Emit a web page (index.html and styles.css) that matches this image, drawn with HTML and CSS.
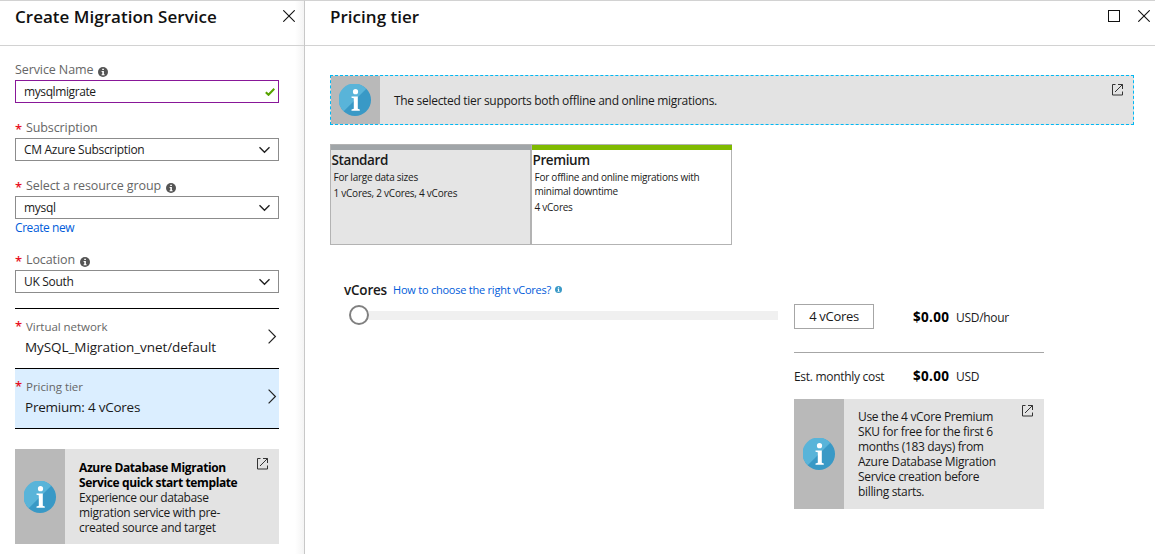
FILE: index.html
```
<!DOCTYPE html>
<html lang="en">
<head>
<meta charset="utf-8">
<title>Create Migration Service</title>
<link rel="stylesheet" href="styles.css">
</head>
<body>
<svg class="defs" width="0" height="0" aria-hidden="true">
  <symbol id="close" viewBox="0 0 12 12"><path d="M.3.3 11.7 11.7M11.7.3.3 11.7" fill="none" stroke="#111" stroke-width="1.1"/></symbol>
  <symbol id="info" viewBox="0 0 10 10"><circle cx="5" cy="5" r="5" fill="currentColor"/><path d="M4.2 1.7h1.7v1.4H4.2zM3.6 4h2.3v3.3h.7v1H3.6v-1h.7V5h-.7z" fill="#fff"/></symbol>
  <symbol id="down" viewBox="0 0 12 8"><path d="M.5 1.2 5.500 6.200l5-5" fill="none" stroke="#222" stroke-width="1.4"/></symbol>
  <symbol id="right" viewBox="0 0 9 15"><path d="m.6.7 6.800 6.800L.6 14.300" fill="none" stroke="#222" stroke-width="1.2"/></symbol>
  <symbol id="open" viewBox="0 0 12 12"><path d="M4.500.5h-3v10.500h10v-3.500M7 .5h4.500v4.500M11.500.5l-7.500 7.500" fill="none" stroke="#333" stroke-width="1"/></symbol>
  <symbol id="badge" viewBox="0 0 32 32"><circle cx="16" cy="16" r="16" fill="#3999c6"/><path d="M27.300 4.700A16 16 0 1 0 4.700 27.300z" fill="#59b4d9"/><circle cx="16.500" cy="7.700" r="2.600" fill="#fff"/><path d="M12.500 12.500h6.300v12.200l2 .7v1.400h-8.300v-1.400l2.300-.7V14.300l-2.300-.5z" fill="#fff"/></symbol>
</svg>
<main class="portal">
  <section class="blade create">
    <header class="head"><h1 class="title">Create Migration Service</h1><svg class="x"><use href="#close"/></svg></header>
    <div class="form">
      <div class="field">
        <div class="label"><span>Service Name</span><svg class="info"><use href="#info"/></svg></div>
        <div class="control valid"><span>mysqlmigrate</span><svg class="check" viewBox="0 0 10 8"><path d="m.8 4.300 2.700 2.500L9.300.8" fill="none" stroke="#57a300" stroke-width="2.100"/></svg></div>
      </div>
      <div class="field">
        <div class="label"><b class="req">*</b><span>Subscription</span></div>
        <div class="control"><span>CM Azure Subscription</span><svg class="down"><use href="#down"/></svg></div>
      </div>
      <div class="field group">
        <div class="label"><b class="req">*</b><span>Select a resource group</span><svg class="info"><use href="#info"/></svg></div>
        <div class="control"><span>mysql</span><svg class="down"><use href="#down"/></svg></div>
        <a class="link">Create new</a>
      </div>
      <div class="field">
        <div class="label"><b class="req">*</b><span>Location</span><svg class="info"><use href="#info"/></svg></div>
        <div class="control"><span>UK South</span><svg class="down"><use href="#down"/></svg></div>
      </div>
      <div class="pickers">
        <div class="picker"><div class="sublabel"><b class="req">*</b><span>Virtual network</span></div><div class="value">MySQL_Migration_vnet/default</div><svg class="right"><use href="#right"/></svg></div>
        <div class="picker selected"><div class="sublabel"><b class="req">*</b><span>Pricing tier</span></div><div class="value tight">Premium: 4 vCores</div><svg class="right"><use href="#right"/></svg></div>
      </div>
      <aside class="notice quick">
        <div class="stripe"><svg class="badge"><use href="#badge"/></svg></div>
        <p class="copy"><b>Azure Database Migration<br>Service quick start template</b><br>Experience our database<br><span class="loose">migration service with pre-</span><br><span class="loose">created source and target</span></p>
        <svg class="open"><use href="#open"/></svg>
      </aside>
    </div>
  </section>
  <section class="blade pricing">
    <header class="head"><h1 class="title">Pricing tier</h1><span class="max"></span><svg class="x"><use href="#close"/></svg></header>
    <div class="content">
      <aside class="notice banner">
        <div class="stripe"><svg class="badge"><use href="#badge"/></svg></div>
        <p class="copy">The selected tier supports both offline and online migrations.</p>
        <svg class="open"><use href="#open"/></svg>
      </aside>
      <div class="tiers">
        <div class="tier standard"><h2>Standard</h2><p>For large data sizes</p><p>1 vCores, 2 vCores, 4 vCores</p></div>
        <div class="tier premium"><h2>Premium</h2><p>For offline and online migrations with<br>minimal downtime</p><p>4 vCores</p></div>
      </div>
      <div class="config">
        <div class="cores">
          <div class="cores-label"><span class="name">vCores</span><a class="how">How to choose the right vCores?</a><svg class="tiny"><use href="#info"/></svg></div>
          <div class="slider"><span class="thumb"></span><span class="track"></span></div>
        </div>
        <div class="cost">
          <div class="row hourly"><div class="cell"><span class="count">4 vCores</span></div><b class="price">$0.00</b><span class="unit">USD/hour</span></div>
          <div class="row monthly"><div class="cell">Est. monthly cost</div><b class="price">$0.00</b><span class="unit">USD</span></div>
          <aside class="notice offer">
            <div class="stripe"><svg class="badge"><use href="#badge"/></svg></div>
            <p class="copy">Use the 4 vCore Premium<br><span class="loose">SKU for free for the first 6</span><br>months (183 days) from<br><span class="loose">Azure Database Migration</span><br>Service creation before<br>billing starts.</p>
            <svg class="open"><use href="#open"/></svg>
          </aside>
        </div>
      </div>
    </div>
  </section>
</main>
</body>
</html>
```
FILE: styles.css
```
* { box-sizing: border-box; }
body { margin: 0; background: #fff; color: #1a1a1a; font: 12px/15px "Open Sans", "Noto Sans", sans-serif; letter-spacing: -.3px; overflow: hidden; }
h1, h2, p { margin: 0; }
svg { display: block; flex: none; }
.defs { position: absolute; }
.portal { display: flex; width: 1155px; height: 554px; }
.blade { border-top: 1px solid #d2d2d2; }
.create { width: 305px; border-right: 1px solid #c8c8c8; background: linear-gradient(to left, #f4f4f4, #fff 9px); }
.pricing { flex: 1; }
.head { display: flex; align-items: flex-start; height: 45px; border-bottom: 1px solid #d2d2d2; padding: 9px 9px 0 15px; }
.pricing .head { padding: 9px 5px 0 25px; }
.title { flex: 1; font-size: 17px; line-height: 14px; font-weight: 600; letter-spacing: .02px; color: #111; white-space: nowrap; }
.x { width: 12px; height: 12px; }
.max { width: 12px; height: 12px; border: 1px solid #111; margin-right: 18px; }
.form { padding: 16px 25px 0 15px; }
.field { height: 58px; }
.field.group { height: 74px; }
.label { display: flex; height: 18px; line-height: 16px; color: #666; font-size: 12.5px; letter-spacing: -.1px; white-space: nowrap; }
.info { width: 10px; height: 10px; margin: 5px 0 0 5px; color: #555; }
.req { width: 11px; color: #e81123; font-size: 13px; font-weight: 600; line-height: 18px; }
.control { display: flex; align-items: center; justify-content: space-between; height: 23px; border: 1px solid #8c8c8c; padding: 0 7px 0 8px; background: #fff; line-height: 20px; white-space: nowrap; }
.control.valid { border-color: #881798; padding-right: 3px; letter-spacing: -.4px; }
.check { width: 10px; height: 8px; }
.down { width: 12px; height: 8px; margin-top: 1px; }
.link { display: block; line-height: 18px; letter-spacing: -.42px; color: #015cda; }
.pickers { margin-top: -2px; border-top: 1px solid #000; }
.picker { display: grid; grid-template: 20px 20px / 1fr 9px; height: 60px; padding: 8px 2px 0 0; border-bottom: 1px solid #000; white-space: nowrap; }
.picker.selected { background: #dbeeff; }
.sublabel { display: flex; color: #666; font-size: 11.5px; letter-spacing: -.04px; line-height: 20px; }
.value { grid-column: 1; grid-row: 2; padding-left: 10px; font-size: 13.5px; letter-spacing: -.07px; line-height: 20px; }
.value.tight { letter-spacing: -.23px; }
.right { grid-column: 2; grid-row: 1 / 3; width: 9px; height: 15px; margin-top: 12px; }
.notice { display: flex; background: #e3e3e3; }
.stripe { width: 50px; flex: none; display: flex; align-items: center; justify-content: center; background: #b9b9b9; }
.badge { width: 32px; height: 32px; }
.copy { flex: 1; padding-left: 14px; white-space: nowrap; }
.open { width: 12px; height: 12px; }
.quick { height: 95px; margin-top: 20px; }
.quick .copy { padding-top: 11px; letter-spacing: -.4px; }
.quick b { font-weight: 700; letter-spacing: -.38px; color: #000; }
.quick .open { margin: 9px 11px 0 0; }
.copy .loose { letter-spacing: -.3px; }
.content { padding: 29px 21px 0 25px; }
.banner { height: 50px; border: 1px dashed #00b8f4; }
.banner .stripe { width: 49px; padding-right: 1px; }
.banner .copy { line-height: 49px; }
.banner .open { margin: 8px 10px 0 0; }
.tiers { display: flex; width: 402px; height: 101px; margin-top: 19px; }
.tier { width: 201px; border: 1px solid #b3b3b3; font-size: 10px; letter-spacing: -.25px; line-height: 14px; white-space: nowrap; }
.tier::before { content: ""; display: block; height: 5px; margin-right: -1px; background: #a0a5a8; }
.standard { background: #e5e5e5; }
.premium::before { background: #7fba00; }
.tier h2 { padding-left: .5px; font-size: 13.5px; font-weight: 600; letter-spacing: -.4px; line-height: 20px; }
.tier p { padding: 0 0 2px 2.5px; }
.config { display: flex; margin-top: 36px; }
.cores { width: 464px; padding-right: 16px; }
.cores-label { display: flex; align-items: center; height: 18px; padding-left: 14px; white-space: nowrap; }
.name { font-size: 13.5px; font-weight: 600; letter-spacing: -.2px; }
.how { margin: -1px 0 0 6px; color: #015cda; font-size: 11px; letter-spacing: -.23px; }
.tiny { width: 7px; height: 7px; margin: -1px 0 0 4px; color: #3999c6; }
.slider { display: flex; align-items: center; height: 20px; margin-top: 6px; padding-left: 19px; }
.thumb { width: 20px; height: 20px; border: 2px solid #808080; border-radius: 50%; background: #fff; }
.track { flex: 1; height: 9px; background: #f0f0f0; }
.cost { width: 250px; padding-top: 23px; }
.row { display: flex; white-space: nowrap; }
.cell { width: 119px; }
.hourly { height: 49px; border-bottom: 1px solid #a6a6a6; line-height: 27px; }
.count { display: flex; align-items: center; justify-content: center; width: 80px; height: 25px; border: 1px solid #a6a6a6; font-size: 13px; }
.price { width: 43px; color: #000; font-size: 13.5px; letter-spacing: .3px; }
.unit { letter-spacing: -.3px; }
.monthly { height: 46px; padding-top: 15px; line-height: 17px; }
.offer { height: 110px; }
.offer .copy { padding-top: 10px; letter-spacing: -.34px; }
.offer .open { margin: 6px 11px 0 0; }
```
